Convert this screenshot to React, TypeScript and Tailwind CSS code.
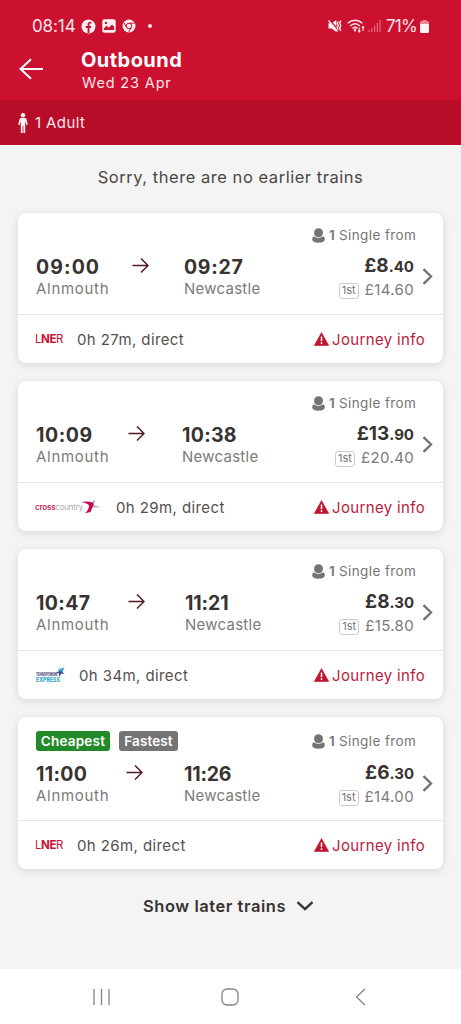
import React from "react";

type Brand = "lner" | "crosscountry" | "transpennine";

interface Journey {
  depart: string;
  arrive: string;
  brand: Brand;
  duration: string;
  pounds: string;
  pence: string;
  first: string;
  departClass: string;
  arriveClass: string;
  stationClass: string;
  badges?: boolean;
}

const journeys: Journey[] = [
  { depart: "09:00", arrive: "09:27", brand: "lner", duration: "0h 27m, direct", pounds: "£8", pence: ".40", first: "£14.60", departClass: "w-[96px] tracking-[1.1px]", arriveClass: "w-[112px] tracking-[0.7px]", stationClass: "w-[112px]" },
  { depart: "10:09", arrive: "10:38", brand: "crosscountry", duration: "0h 29m, direct", pounds: "£13", pence: ".90", first: "£20.40", departClass: "w-[92px] tracking-[0.6px]", arriveClass: "w-[114px] tracking-[0.3px]", stationClass: "w-[114px]" },
  { depart: "10:47", arrive: "11:21", brand: "transpennine", duration: "0h 34m, direct", pounds: "£8", pence: ".30", first: "£15.80", departClass: "w-[92px] tracking-[0.4px]", arriveClass: "w-[111px] tracking-[-0.1px]", stationClass: "w-[111px]" },
  { depart: "11:00", arrive: "11:26", brand: "lner", duration: "0h 26m, direct", pounds: "£6", pence: ".30", first: "£14.00", departClass: "w-[90px] tracking-[0.3px]", arriveClass: "w-[112px] tracking-[-0.2px]", stationClass: "w-[112px]", badges: true },
];

function StatusBar() {
  return (
    <div className="flex h-[52px] items-center pl-8 pr-[31px]">
      <span className="w-[44px] whitespace-nowrap text-[17px] leading-5 tracking-[-0.1px] text-[#ffe5e9]">08:14</span>
      <svg className="ml-[5px] size-[15px]" viewBox="0 0 15 15">
        <circle cx="7.5" cy="7.5" r="7" fill="#fff2f4" />
        <path d="M6.600 14V9H4.700V6.900h1.900V5.500c0-1.900 1-2.800 2.700-2.800h1.200v1.900h-1c-.7 0-1 .3-1 1v1.300h1.900L10.100 9H8.500v5z" fill="#cc102f" />
      </svg>
      <svg className="ml-[6px] size-[14px]" viewBox="0 0 14 14">
        <rect x=".3" y=".3" width="13.400" height="13.400" rx="2.200" fill="#fff2f4" />
        <circle cx="4" cy="4" r="1.200" fill="#cc102f" />
        <path d="M2 11V9.200l2.600-2.400 2.400 2 3-3.200 2.200 2.300V11z" fill="#cc102f" />
      </svg>
      <svg className="ml-[6px] size-[14px]" viewBox="0 0 14 14" fill="none">
        <circle cx="7" cy="7" r="6.500" fill="#fff2f4" />
        <circle cx="7" cy="7" r="2.800" stroke="#cc102f" strokeWidth="1" />
        <path d="M7 4.200h5.500M4.600 8.400 2 3.900M9.400 8.400 6.700 13" stroke="#cc102f" strokeWidth="1" />
      </svg>
      <span className="ml-[12px] size-1 rounded-full bg-[#ffe5e9]" />
      <svg className="ml-auto h-4 w-[14px]" viewBox="0 0 14 16" fill="none">
        <path d="M.5 5.300h3.200L8.300 2v12l-4.600-3.500H.5z" fill="#fff2f4" />
        <path d="m1.500 1.500 9 11" stroke="#cc102f" strokeWidth="1.300" />
        <path d="m.5 2.500 9 11M10.200 3.500l-.9 2 .9 2-.9 2 .9 2M12.700 2.500l-1 2.500 1 2.500-1 2.500 1 3" stroke="#fff2f4" strokeWidth="1.400" />
      </svg>
      <svg className="ml-[5px] h-4 w-[18px]" viewBox="0 0 18 16" fill="none" stroke="#ffe5e9" strokeWidth="1.500">
        <path d="M.8 5.300c4.300-4.100 10.200-4.100 14.400 0M3.100 8c3-2.800 6.800-2.800 9.800 0M5.500 10.500c1.700-1.400 3.500-1.400 4.900 0" />
        <circle cx="8" cy="12.200" r=".5" />
        <path d="M12.200 9.500V14m-1.200-1.500 1.200 1.500 1.200-1.500M16 13V8.500M14.800 10 16 8.500l1.200 1.500" strokeWidth="1.100" />
      </svg>
      <svg className="ml-[3px] h-[14px] w-[13px]" viewBox="0 0 13 14" fill="none" stroke="#e4687d" strokeWidth="1.200">
        <path d="M1 11v2M3.800 9v4M6.600 6.500V13M9.300 4v9M12 1v12" />
      </svg>
      <span className="ml-[5px] w-[33px] whitespace-nowrap text-[17px] leading-5 tracking-[-0.800px] text-[#ffe5e9]">71%</span>
      <svg className="ml-[1px] mr-px h-[14px] w-[9px]" viewBox="0 0 9 14">
        <path d="M2.500 1h4v1.200H8q1 0 1 1V5H0V3.200q0-1 1-1h1.500z" fill="#ec8797" />
        <path d="M0 5h9v7.500Q9 14 7.500 14h-6Q0 14 0 12.500z" fill="#fff2f4" />
      </svg>
    </div>
  );
}

function Header() {
  return (
    <header>
      <div className="h-[100px] bg-[#cc102f] text-white">
        <StatusBar />
        <div className="flex h-12">
          <svg className="ml-[19px] mt-[6px] h-[22px] w-6" viewBox="0 0 24 22" fill="none" stroke="currentColor" strokeWidth="2">
            <path d="M24 11H2M12 1.200 1.500 11 12 20.800" />
          </svg>
          <div className="ml-[38px] -mt-[3px] whitespace-nowrap">
            <h1 className="text-[20px] font-bold leading-[23px] tracking-[0.450px]">Outbound</h1>
            <p className="pl-px text-[14.500px] leading-[21px] tracking-[0.850px] text-[#ffe5e9]">Wed 23 Apr</p>
          </div>
        </div>
      </div>
      <div className="flex h-[45px] items-center bg-[#b80d28] pl-[18px] text-[#ffe5e9]">
        <svg className="h-[20px] w-[10px]" viewBox="0 0 10 20" fill="#fff2f4">
          <circle cx="5" cy="2.200" r="2.200" />
          <path d="M3 5h4q1.200 0 1.500 1.200l1.300 5.300-1.400.5-1.200-4V20H5.400v-7h-.8v7H2.800V8l-1.200 4-1.400-.5 1.300-5.300Q1.800 5 3 5" />
        </svg>
        <span className="ml-[7px] mt-px text-[15px] tracking-[0.4px]">1 Adult</span>
      </div>
    </header>
  );
}

function BrandLogo({ brand }: { brand: Brand }) {
  if (brand === "lner") {
    return (
      <span className="w-[42px] whitespace-nowrap text-[11.500px] leading-4 tracking-[-0.400px] text-[#cc102f]">
        L<b>NE</b>R
      </span>
    );
  }
  if (brand === "crosscountry") {
    return (
      <span className="flex w-[81px] items-center whitespace-nowrap text-[8px] leading-4 tracking-[-0.2px]">
        <span className="font-semibold text-[#ca2366]">cross</span>
        <span className="text-[#aaa7a4]">country</span>
        <svg className="-ml-[2px] h-[14px] w-[20px] shrink-0" viewBox="0 0 20 14">
          <path d="M8 5 13 0l1.200.5L12.300 5 20 7.200 10 7.500z" fill="#b0b0ad" />
          <path d="M0 2q7-1.200 11.500.5 2 1 .2 4.300L9.500 12l-5.500 1.300q3.500-3 4-7Q8.300 3.500 0 2" fill="#c70755" />
        </svg>
      </span>
    );
  }
  return (
    <span className="flex w-[44px] items-center pl-px">
      <svg className="h-[18px] w-[30px] overflow-visible" viewBox="0 0 30 18" fontFamily="Inter, sans-serif">
        <text x="0" y="10" fontSize="4.200" fontWeight="800" fill="#4d4a76" textLength="22" lengthAdjust="spacingAndGlyphs">TRANSPENNINE</text>
        <text x="0" y="15.500" fontSize="6.500" fontWeight="700" fill="#199cc4" textLength="24" lengthAdjust="spacingAndGlyphs">EXPRESS</text>
        <path d="m22 3 2 1.500L27 2l-.5 4 2 2-3-.5L23 11V7.500L20 6l3-.5z" fill="#3d4d98" />
        <path d="m23 1 2 2 3.500-2-1.500 4-2.500 1z" fill="#24a9d0" />
      </svg>
    </span>
  );
}

function JourneyCard({ journey }: { journey: Journey }) {
  return (
    <article className="rounded-[8px] bg-white shadow-[0_2px_8px_rgba(0,0,0,0.12)]">
      <div className={journey.badges ? "h-[104px] border-b border-[#e5e5e5] pt-[14px]" : "h-[102px] border-b border-[#e5e5e5] pt-[12px]"}>
        <div className={journey.badges ? "flex h-[30px] items-start justify-between pl-[18px] pr-[27px]" : "flex h-[29px] items-start justify-end pr-[27px]"}>
          {journey.badges && (
            <div className="flex gap-[9px] whitespace-nowrap text-[13.500px] font-semibold leading-[20px] text-white">
              <span className="w-[74px] rounded-[3px] bg-[#238a29] text-center tracking-[0.2px]">Cheapest</span>
              <span className="w-[59px] rounded-[3px] bg-[#757373] text-center tracking-[0.1px]">Fastest</span>
            </div>
          )}
          <div className="flex h-[21px] items-center whitespace-nowrap text-[13.500px] text-[#777574]">
            <svg className="-mt-px h-[15px] w-[13px]" viewBox="0 0 13 15" fill="#757373">
              <circle cx="6.500" cy="4.800" r="4.500" />
              <path d="M1.800 8.300q4.700 3.600 9.400 0 1.600.9 1.600 2.600 0 3.800-6.300 3.800T.2 10.900q0-1.700 1.600-2.600" />
            </svg>
            <b className="ml-1 w-[10px] font-semibold">1</b>
            <span className="w-[77px] tracking-[0.400px]">Single from</span>
          </div>
        </div>
        <div className="flex pl-[18px] pr-[10px]">
          <div className="flex w-[260px] flex-col whitespace-nowrap">
            <div className="flex h-[25px] items-center text-[19.500px] font-bold leading-[25px] text-[#383330]">
              <span className={`mt-[2px] ${journey.departClass}`}>{journey.depart}</span>
              <svg className="-mt-[3px] h-[15px] w-[17px] shrink-0" viewBox="0 0 17 15" fill="none" stroke="#4d1c22" strokeWidth="1.500">
                <path d="M.5 7.500h15.500M9 .5l7 7-7 7" />
              </svg>
              <span className={`ml-auto mt-[2px] ${journey.arriveClass}`}>{journey.arrive}</span>
            </div>
            <div className="flex justify-between text-[15px] leading-[20px] text-[#7c7a79]">
              <span className="tracking-[0.700px]">Alnmouth</span>
              <span className={`tracking-[0.250px] ${journey.stationClass}`}>Newcastle</span>
            </div>
          </div>
          <div className="ml-auto flex flex-col items-end whitespace-nowrap">
            <div className="h-[25px] text-[19px] font-bold leading-[24px] text-[#383330]">
              {journey.pounds}<span className="text-[15px]">{journey.pence}</span>
            </div>
            <div className="flex h-[22px] items-center gap-[6px]">
              <span className="mt-px flex h-4 w-5 items-center justify-center rounded-[3px] border border-[#cccbca] text-[11px] text-[#777574]">1st</span>
              <span className="text-[15px] tracking-[0.350px] text-[#7c7a79]">{journey.first}</span>
            </div>
          </div>
          <svg className="ml-[8px] mt-[14px] h-[17px] w-[11px]" viewBox="0 0 11 17" fill="none" stroke="#757373" strokeWidth="2.400">
            <path d="m1.500 1.200 7.500 7.300-7.500 7.300" />
          </svg>
        </div>
      </div>
      <div className="flex h-[48px] items-center pl-[17px] pr-[18px] text-[15px]">
        <BrandLogo brand={journey.brand} />
        <span className="mt-[2px] whitespace-nowrap tracking-[0.400px] text-[#55504e]">{journey.duration}</span>
        <svg className="ml-auto h-[14px] w-[15px]" viewBox="0 0 15 14">
          <path d="M7.500.5 14.700 13.500H.3z" fill="#c01532" stroke="#c01532" strokeLinejoin="round" strokeWidth=".6" />
          <path d="M7.500 4.500v4.800m0 1v1.700" stroke="#fff" strokeWidth="1.500" />
        </svg>
        <span className="ml-[3px] mt-[2px] w-[93px] whitespace-nowrap tracking-[0.350px] text-[#b91c3c]">Journey info</span>
      </div>
    </article>
  );
}

export default function App() {
  return (
    <div className="flex h-[1024px] w-[461px] flex-col overflow-hidden bg-[#f4f4f4] font-['Inter',sans-serif]">
      <Header />
      <main className="flex-1 px-[18px]">
        <p className="flex h-[68px] items-center justify-center whitespace-nowrap pb-[4px] text-[16.500px] tracking-[0.540px] text-[#4b4643]">Sorry, there are no earlier trains</p>
        <div className="flex flex-col gap-[18px]">
          {journeys.map((journey) => <JourneyCard key={journey.depart} journey={journey} />)}
        </div>
        <button className="ml-[125px] mt-[25px] flex items-center whitespace-nowrap text-left text-[16.500px] font-semibold leading-6 tracking-[0.550px] text-[#383330]">
          <span className="w-[153px]">Show later trains</span>
          <svg className="-mt-px h-[10px] w-[18px]" viewBox="0 0 18 10" fill="none" stroke="currentColor" strokeWidth="2.300">
            <path d="m1.500 1.200 7.500 7 7.500-7" />
          </svg>
        </button>
      </main>
      <nav className="flex h-[55px] items-center bg-white pl-[93px] pr-[95px] text-[#858585]">
        <svg className="h-[18px] w-[17px]" viewBox="0 0 17 18" stroke="currentColor" strokeWidth="1.300"><path d="M1 1v16M8.500 1v16M16 1v16" /></svg>
        <svg className="ml-[111px] h-[18px] w-[18px]" viewBox="0 0 18 18" fill="none" stroke="currentColor" strokeWidth="1.300"><rect x="1" y="1" width="16" height="16" rx="5" /></svg>
        <svg className="ml-auto h-[18px] w-[11px]" viewBox="0 0 11 18" fill="none" stroke="currentColor" strokeWidth="1.300"><path d="M10 1 1.500 9l8.500 8" /></svg>
      </nav>
    </div>
  );
}
